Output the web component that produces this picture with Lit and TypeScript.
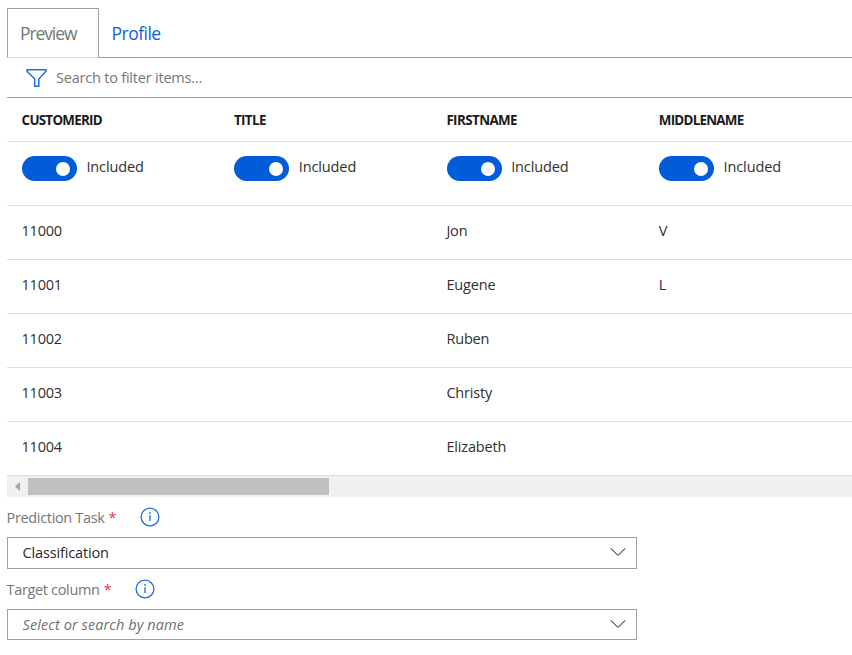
import { LitElement, html, css, svg } from "lit";
import { customElement, property } from "lit/decorators.js";

interface Column {
  name: string;
  cls: string;
  values: string[];
}

const COLUMNS: Column[] = [
  { name: "CUSTOMERID", cls: "c1", values: ["11000", "11001", "11002", "11003", "11004"] },
  { name: "TITLE", cls: "c2", values: ["", "", "", "", ""] },
  { name: "FIRSTNAME", cls: "c3", values: ["Jon", "Eugene", "Ruben", "Christy", "Elizabeth"] },
  { name: "MIDDLENAME", cls: "c4", values: ["V", "L", "", "", ""] },
];

@customElement("toggle-switch")
export class ToggleSwitch extends LitElement {
  static styles = css`
    :host { display: flex; align-items: flex-start; }
    .track {
      box-sizing: border-box; width: 55px; height: 25px; border-radius: 12.5px;
      background: #015cda; display: flex; justify-content: flex-end; padding: 6px 6.6px 0 0;
    }
    .knob { width: 14px; height: 14px; border-radius: 50%; background: #fff; }
    .label { margin-left: 9.4px; line-height: 21px; letter-spacing: -0.12px; }
  `;
  render() {
    return html`<span class="track"><span class="knob"></span></span><span class="label">Included</span>`;
  }
}

@customElement("field-select")
export class FieldSelect extends LitElement {
  @property() label = "";
  @property() value = "";
  @property() placeholder = "";

  static styles = css`
    :host { display: block; }
    .head { display: flex; align-items: center; height: 22px; color: #767676; }
    .label { letter-spacing: -0.33px; margin-left: -0.5px; line-height: 20px; margin-top: -1px; }
    .star { color: #e8344a; margin-left: 4px; margin-top: -1px; }
    .info { margin-left: 23.5px; margin-top: -3px; display: block; }
    .box {
      box-sizing: border-box; width: 630px; height: var(--box-height, 32px);
      border: 1px solid #a0a0a0; display: flex; align-items: center;
      justify-content: space-between; padding: 0 10px 0 14.6px; margin-top: 8px;
    }
    .value { color: #2a2a2a; letter-spacing: -0.15px; margin-top: -1px; }
    .hint { color: #707070; font-style: italic; letter-spacing: 0.08px; margin-top: 1px; }
    .chevron { display: block; margin-top: -2px; }
  `;
  render() {
    return html`
      <div class="head">
        <span class="label">${this.label}</span><span class="star">*</span>
        <svg class="info" width="20" height="20" viewBox="0 0 20 20">
          <circle cx="10" cy="10" r="8.9" fill="none" stroke="#1f6fe0" stroke-width="1.3" />
          <path d="M10 8.2V14" stroke="#1f6fe0" stroke-width="1.4" />
          <circle cx="10" cy="6" r="0.9" fill="#1f6fe0" />
        </svg>
      </div>
      <div class="box">
        ${this.value
          ? html`<span class="value">${this.value}</span>`
          : html`<span class="hint">${this.placeholder}</span>`}
        <svg class="chevron" width="16" height="10" viewBox="0 0 16 10">
          <path d="M0.8 1.3L8 8.3L15.2 1.3" fill="none" stroke="#555" stroke-width="1.1" />
        </svg>
      </div>`;
  }
}

@customElement("app-root")
export class AppRoot extends LitElement {
  static styles = css`
    :host {
      display: block; box-sizing: border-box; width: 852px; height: 655px; overflow: hidden;
      padding: 8px 0 0 7px; background: #fff; color: #303030; white-space: nowrap;
      font: 400 14.5px/20px "Open Sans", "Noto Sans", sans-serif;
    }
    .tabs { display: flex; height: 50px; font-size: 17.5px; }
    .tab { box-sizing: border-box; line-height: 50px; }
    .active {
      width: 92px; border: 1px solid #a0a0a0; border-bottom-color: #dcdfe2;
      padding-left: 12px; color: #767676; letter-spacing: -1.1px; line-height: 48px;
    }
    .other {
      flex: 1; border-bottom: 1px solid #a0a0a0; padding-left: 12.5px; color: #1062da;
      letter-spacing: -0.52px;
    }
    .search {
      box-sizing: border-box; height: 40px; border-bottom: 1px solid #a0a0a0;
      display: flex; align-items: center; padding-left: 19px; color: #767676;
    }
    .funnel { display: block; margin-right: 9px; }
    .query { letter-spacing: -0.21px; margin-top: 1px; }
    .row {
      box-sizing: border-box; height: 54px; border-bottom: 1px solid #d9dfe4;
      display: grid; grid-template-columns: repeat(4, 212.4px); align-items: center;
    }
    .cell { padding-left: 15px; }
    .header { height: 44px; font-weight: 700; font-size: 13.4px; color: #1b1b1b; padding-top: 1px; }
    .header .cell { padding-left: 14.6px; }
    .c1 { letter-spacing: -0.75px; }
    .c2 { letter-spacing: -0.65px; }
    .c3 { letter-spacing: -0.6px; }
    .c4 { letter-spacing: -0.75px; }
    .toggles { height: 64px; align-items: start; padding-top: 14px; }
    .data { padding-bottom: 3px; }
    .data .cell { padding-left: 14.6px; }
    .data .c1 { letter-spacing: -0.27px; }
    .data .c3 { letter-spacing: -0.16px; }
    .scroll { height: 21px; background: #f0f0f0; display: flex; align-items: center; }
    .arrow { display: block; width: 21px; height: 21px; }
    .thumb { width: 301px; height: 17px; background: #c0c0c0; }
    .fields { padding-top: 10px; }
    .target { --box-height: 31px; margin-top: 10px; }
  `;

  render() {
    return html`
      <div class="tabs">
        <div class="tab active">Preview</div>
        <div class="tab other">Profile</div>
      </div>
      <div class="search">
        <svg class="funnel" width="21" height="20" viewBox="0 0 21 20">
          ${svg`<path d="M1 1.8H20V3.2L12.8 11V18.3H8.7V11L1 3.2Z" fill="none" stroke="#1f6fe0" stroke-width="1.5" />`}
        </svg>
        <span class="query">Search to filter items...</span>
      </div>
      <div class="row header">
        ${COLUMNS.map((c) => html`<div class="cell ${c.cls}">${c.name}</div>`)}
      </div>
      <div class="row toggles">
        ${COLUMNS.map(() => html`<toggle-switch class="cell"></toggle-switch>`)}
      </div>
      ${COLUMNS[0].values.map(
        (_, i) =>
          html`<div class="row data">${COLUMNS.map((c) => html`<div class="cell ${c.cls}">${c.values[i]}</div>`)}</div>`
      )}
      <div class="scroll">
        <svg class="arrow" viewBox="0 0 21 21"><path d="M13 6V15L8 10.5Z" fill="#a3a3a3" /></svg>
        <div class="thumb"></div>
      </div>
      <div class="fields">
        <field-select label="Prediction Task" value="Classification"></field-select>
        <field-select class="target" label="Target column" placeholder="Select or search by name"></field-select>
      </div>`;
  }
}
